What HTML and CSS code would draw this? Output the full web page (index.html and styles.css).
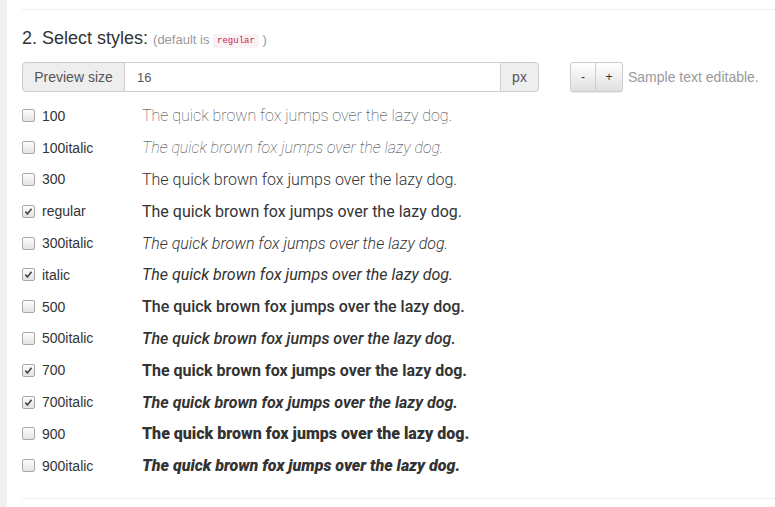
FILE: index.html
```html
<!DOCTYPE html>
<html>
<head>
<meta charset="utf-8">
<link rel="stylesheet" href="styles.css">
</head>
<body>
<div class="page">
  <div class="strip"></div>
  <div class="content">
    <hr class="rule top">
    <h3 class="heading">2. Select styles: <small>(default is <code>regular</code> )</small></h3>
    <div class="toolbar">
      <div class="input-group">
        <span class="addon first">Preview size</span>
        <span class="field">16</span>
        <span class="addon last">px</span>
      </div>
      <div class="btn-group">
        <span class="btn">-</span>
        <span class="btn">+</span>
      </div>
      <span class="hint">Sample text editable.</span>
    </div>
    <div class="rows">
      <div class="row"><span class="cb"></span><span class="lbl">100</span><span class="sample w100">The quick brown fox jumps over the lazy dog.</span></div>
      <div class="row"><span class="cb"></span><span class="lbl">100italic</span><span class="sample w100 it">The quick brown fox jumps over the lazy dog.</span></div>
      <div class="row"><span class="cb"></span><span class="lbl">300</span><span class="sample w300">The quick brown fox jumps over the lazy dog.</span></div>
      <div class="row"><span class="cb on"><svg viewBox="0 0 13 13" width="13" height="13"><path d="M3.4 6.6 L5.4 9 L9.6 3.8" fill="none" stroke="#444" stroke-width="1.6"/></svg></span><span class="lbl">regular</span><span class="sample w400">The quick brown fox jumps over the lazy dog.</span></div>
      <div class="row"><span class="cb"></span><span class="lbl">300italic</span><span class="sample w300 it">The quick brown fox jumps over the lazy dog.</span></div>
      <div class="row"><span class="cb on"><svg viewBox="0 0 13 13" width="13" height="13"><path d="M3.4 6.6 L5.4 9 L9.6 3.8" fill="none" stroke="#444" stroke-width="1.6"/></svg></span><span class="lbl">italic</span><span class="sample w400 it">The quick brown fox jumps over the lazy dog.</span></div>
      <div class="row"><span class="cb"></span><span class="lbl">500</span><span class="sample w500">The quick brown fox jumps over the lazy dog.</span></div>
      <div class="row"><span class="cb"></span><span class="lbl">500italic</span><span class="sample w500 it">The quick brown fox jumps over the lazy dog.</span></div>
      <div class="row"><span class="cb on"><svg viewBox="0 0 13 13" width="13" height="13"><path d="M3.4 6.6 L5.4 9 L9.6 3.8" fill="none" stroke="#444" stroke-width="1.6"/></svg></span><span class="lbl">700</span><span class="sample w700">The quick brown fox jumps over the lazy dog.</span></div>
      <div class="row"><span class="cb on"><svg viewBox="0 0 13 13" width="13" height="13"><path d="M3.4 6.6 L5.4 9 L9.6 3.8" fill="none" stroke="#444" stroke-width="1.6"/></svg></span><span class="lbl">700italic</span><span class="sample w700 it">The quick brown fox jumps over the lazy dog.</span></div>
      <div class="row"><span class="cb"></span><span class="lbl">900</span><span class="sample w900">The quick brown fox jumps over the lazy dog.</span></div>
      <div class="row"><span class="cb"></span><span class="lbl">900italic</span><span class="sample w900 it">The quick brown fox jumps over the lazy dog.</span></div>
    </div>
    <hr class="rule bottom">
  </div>
</div>
</body>
</html>
```

FILE: styles.css
```css
html, body {
  margin: 0;
  padding: 0;
  background: #fff;
}
body {
  font-family: "Liberation Sans", Arial, sans-serif;
  font-size: 14px;
  color: #333;
}
.page {
  display: flex;
  width: 775px;
  height: 507px;
  overflow: hidden;
}
.strip {
  flex: 0 0 7px;
  background: #f1f1f1;
}
.content {
  flex: 1;
  padding-left: 15px;
  padding-top: 9px;
}
.rule {
  margin: 0;
  border: 0;
  border-top: 1px solid #eee;
  height: 0;
}
.heading {
  margin: 18px 0 0 0;
  font-size: 18px;
  line-height: 20px;
  font-weight: normal;
  color: #333;
}
.heading small {
  font-size: 13px;
  color: #999;
}
.heading code {
  font-family: "Liberation Mono", monospace;
  font-size: 9px;
  color: #c7254e;
  background: #f9f2f4;
  padding: 2px 4px;
  border-radius: 3px;
  vertical-align: 1px;
}
.toolbar {
  display: flex;
  align-items: center;
  margin-top: 11px;
  height: 30px;
}
.input-group {
  display: flex;
  width: 517px;
  height: 30px;
}
.addon {
  display: flex;
  align-items: center;
  justify-content: center;
  background: #eee;
  border: 1px solid #ccc;
  color: #555;
  font-size: 14px;
  box-sizing: border-box;
}
.addon.first {
  width: 103px;
  border-radius: 4px 0 0 4px;
}
.addon.last {
  width: 39px;
  border-radius: 0 4px 4px 0;
}
.field {
  flex: 1;
  display: flex;
  align-items: center;
  padding-left: 12px;
  border-top: 1px solid #ccc;
  border-bottom: 1px solid #ccc;
  font-size: 13px;
  color: #555;
  box-sizing: border-box;
}
.btn-group {
  display: flex;
  margin-left: 31px;
  height: 30px;
}
.btn {
  display: flex;
  align-items: center;
  justify-content: center;
  width: 26px;
  height: 30px;
  box-sizing: border-box;
  border: 1px solid #ccc;
  background: linear-gradient(to bottom, #fff 0%, #e0e0e0 100%);
  font-size: 12px;
  color: #333;
  box-shadow: inset 0 1px 0 rgba(255,255,255,.15), 0 1px 1px rgba(0,0,0,.075);
}
.btn:first-child {
  border-radius: 3px 0 0 3px;
}
.btn:last-child {
  width: 27px;
  border-left: 0;
  border-radius: 0 3px 3px 0;
}
.hint {
  margin-left: 5px;
  color: #999;
  font-size: 14px;
}
.rows {
  margin-top: 8px;
}
.row {
  display: flex;
  align-items: center;
  height: 31.8px;
}
.cb {
  flex: 0 0 13px;
  width: 13px;
  height: 13px;
  box-sizing: border-box;
  border: 1px solid #a9a9a9;
  border-radius: 2px;
  background: linear-gradient(to bottom, #fcfcfc, #e4e4e4);
  position: relative;
}
.cb svg {
  position: absolute;
  left: -1px;
  top: -1px;
}
.lbl {
  margin-left: 7px;
  width: 100px;
  font-size: 14px;
  color: #333;
}
.sample {
  font-family: Roboto, "Noto Sans", sans-serif;
  font-size: 16px;
  color: #333;
  white-space: nowrap;
}
.w100 { font-weight: 100; }
.w300 { font-weight: 300; }
.w400 { font-weight: 400; }
.w500 { font-weight: 500; }
.w700 { font-weight: 700; }
.w900 { font-weight: 900; }
.it { font-style: italic; }
.bottom {
  margin-top: 16px;
}
```
